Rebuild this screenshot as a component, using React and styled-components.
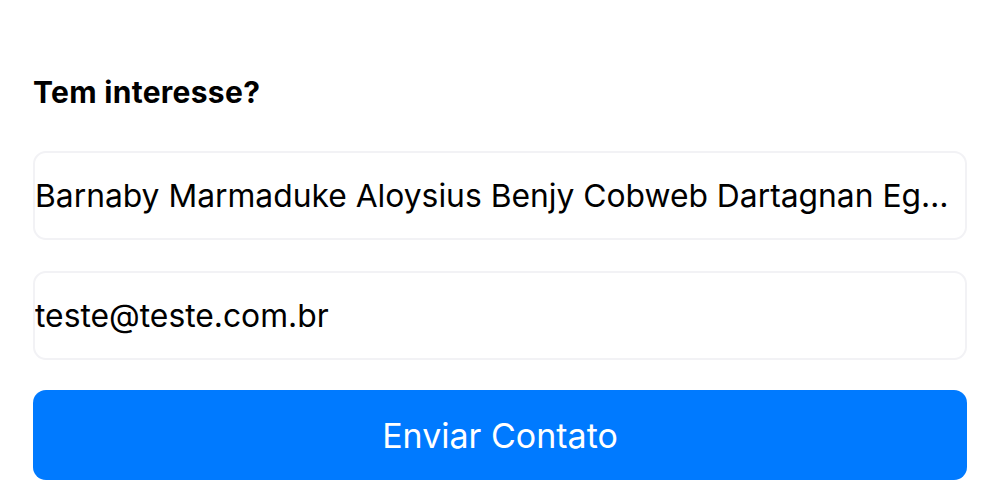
import React from "react";
import styled, { createGlobalStyle } from "styled-components";

const Global = createGlobalStyle`
  html, body { margin: 0; padding: 0; background: #fff; }
  body { font-family: Inter, "Noto Sans", sans-serif; color: #000; }
`;

const Page = styled.div`
  display: flex;
  flex-direction: column;
  padding: 72px 33px 0 33px;
  width: 1000px;
  box-sizing: border-box;
`;

const Title = styled.h2`
  margin: 0 0 39px 0;
  font-size: 30px;
  line-height: 40px;
  font-weight: 700;
  letter-spacing: 0.3px;
`;

const Field = styled.input`
  box-sizing: border-box;
  width: 100%;
  height: 89px;
  margin-bottom: ${(p) => p.$gap}px;
  padding: 0 10px 0 0;
  border: 2px solid #f2f2f5;
  border-radius: 13px;
  background: #fff;
  font-family: Inter, "Noto Sans", sans-serif;
  font-size: 31.8px;
  color: #000;
  text-overflow: ellipsis;
  outline: none;
`;

const Button = styled.button`
  height: 90px;
  width: 100%;
  border: none;
  border-radius: 13px;
  background: #007aff;
  color: #fff;
  font-family: Inter, "Noto Sans", sans-serif;
  font-size: 34px;
  font-weight: 400;
  cursor: pointer;
`;

export default function App() {
  return (
    <>
      <Global />
      <Page>
        <Title>Tem interesse?</Title>
        <Field
          $gap={31}
          readOnly
          value="Barnaby Marmaduke Aloysius Benjy Cobweb Dartagnan Egbert Felix Gaspar Humbert Ignatius Jayden Kasper Leroy Maximilian"
        />
        <Field $gap={30} readOnly value="teste@teste.com.br" />
        <Button>Enviar Contato</Button>
      </Page>
    </>
  );
}
